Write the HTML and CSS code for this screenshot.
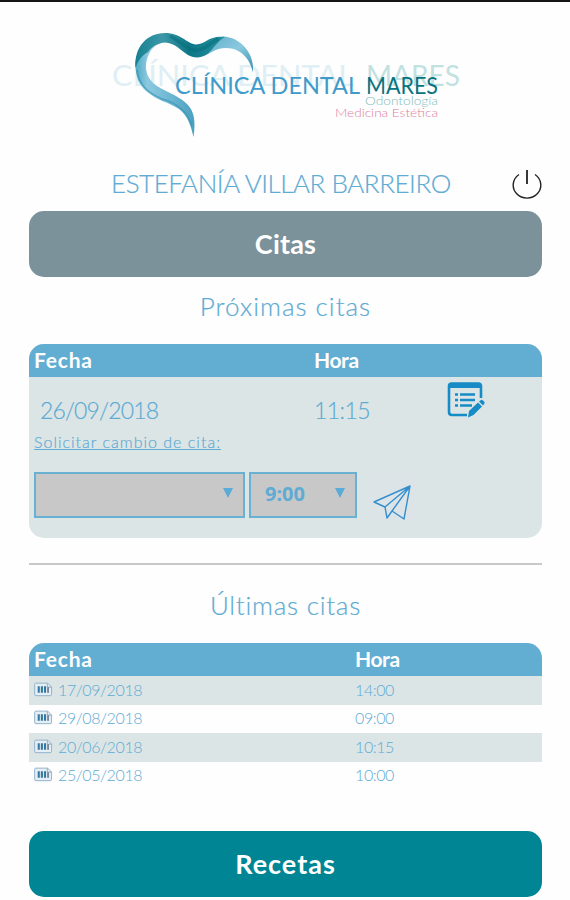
FILE: index.html
```html
<!DOCTYPE html>
<html lang="es">
<head>
<meta charset="utf-8">
<title>Clínica Dental Mares</title>
<link rel="stylesheet" href="styles.css">
</head>
<body>
<header class="brand">
  <svg class="logo" width="370" height="114" viewBox="100 28 370 114" role="img" aria-label="Clínica Dental Mares">
    <defs>
      <linearGradient id="ribbon" x1="0" y1="0" x2="1" y2="0">
        <stop offset="0" stop-color="#4fa9c5"/>
        <stop offset=".2" stop-color="#8cc9e0"/>
        <stop offset=".6" stop-color="#6cb6d2"/>
        <stop offset="1" stop-color="#4ba0bf"/>
      </linearGradient>
      <linearGradient id="lobe" x1="0" y1="0" x2="1" y2="1">
        <stop offset="0" stop-color="#5eaec9"/>
        <stop offset=".5" stop-color="#8bc9df"/>
        <stop offset="1" stop-color="#358fae"/>
      </linearGradient>
      <linearGradient id="deep" x1="0" y1="0" x2="1" y2="0">
        <stop offset="0" stop-color="#16808f"/>
        <stop offset=".3" stop-color="#3c98a8"/>
        <stop offset=".6" stop-color="#0d7786"/>
        <stop offset="1" stop-color="#2591a2"/>
      </linearGradient>
    </defs>
    <g class="ghost">
      <text x="112" y="86" textLength="242" lengthAdjust="spacingAndGlyphs" class="ghost-a">CLÍNICA DENTAL</text>
      <text x="366" y="86" textLength="94" lengthAdjust="spacingAndGlyphs" class="ghost-b">MARES</text>
    </g>
    <path fill="url(#ribbon)" d="M135.500 66C136 78 139 84 146 91C157 101 169 102 179 109C188 116 191 126 193.500 137C196 121 194 111 187 104C177 94 162 91 153 83C145 75 144 64 149 54C152 47 158 43 165 42.500L150 40C139 47 135 57 135.500 66Z"/>
    <path fill="url(#lobe)" d="M206 55C211 48 214 39 223 36.500C240 37 255 53 253 72.500C250 59 241 48 226 48C216 48 211 53 206 55Z"/>
    <path fill="url(#deep)" d="M135.500 68C134 47 147 33 165 33C181 33 187 44 196 44.500C206 44 209 35 225 37C217 41 213 50 206 55C200 58.500 193 58 188 55C180 50 175 43 165 42.500C157 43 151 47 148 52C141 56 138 61 135.500 68Z"/>
    <path fill="none" stroke="#056b78" stroke-width="3.500" opacity=".5" d="M170 36C180 41 186 50 196 50.500C206 50 210 42 219 39"/>
    <path fill="none" stroke="#3b96b3" stroke-width="1.500" opacity=".7" d="M137 70C139 87 151 94 162 99C177 103 188 112 192 126"/>
    <text x="175" y="94" textLength="185" lengthAdjust="spacingAndGlyphs" class="mark-a">CLÍNICA DENTAL</text>
    <text x="366" y="94" textLength="72" lengthAdjust="spacingAndGlyphs" class="mark-b">MARES</text>
    <text x="365" y="105" textLength="73" lengthAdjust="spacingAndGlyphs" class="sub-a">Odontología</text>
    <text x="335" y="117" textLength="103" lengthAdjust="spacingAndGlyphs" class="sub-b">Medicina Estética</text>
  </svg>
</header>
<main class="page">
  <div class="user">
    <h1 class="user-name">ESTEFANÍA VILLAR BARREIRO</h1>
    <a class="power" aria-label="Salir">
      <svg width="30" height="31" viewBox="0 0 30 31" fill="none" stroke="#222">
        <path stroke-width="1.400" d="M7 5.500A13.800 13 0 1 0 23 5.500"/>
        <path stroke-width="1.800" d="M15 1V15"/>
      </svg>
    </a>
  </div>
  <div class="button button-citas">Citas</div>
  <h2 class="title title-next">Próximas citas</h2>
  <section class="next">
    <div class="head head-next"><span class="head-date">Fecha</span><span class="head-time">Hora</span></div>
    <div class="appointment">
      <span class="date">26/09/2018</span>
      <span class="time">11:15</span>
      <svg class="note" width="38" height="38" viewBox="0 0 38 38">
        <path fill="none" stroke="#168bc5" stroke-width="2.600" d="M34 17V5Q34 2.500 31.500 2.500H4.500Q2 2.500 2 5V31Q2 34 5 34H20"/>
        <path fill="#168bc5" d="M2 3H34V7H2Z"/>
        <path fill="none" stroke="#168bc5" stroke-width="2.400" d="M8 13.500h3M13 13.500h15M8 19h3M13 19h15M8 24.500h3M13 24.500h12"/>
        <path fill="#168bc5" d="M22 30L31 21.500L35 25.500L26.500 34L21 36.500ZM32 20.500L34 19Q35 18.500 36 19.500L37.500 21Q38 22 37 23L36 24.500Z"/>
      </svg>
    </div>
    <div class="change">Solicitar cambio de cita:</div>
    <div class="controls">
      <div class="select select-day"><span></span><i class="arrow"></i></div>
      <div class="select select-hour"><span>9:00</span><i class="arrow"></i></div>
      <span class="send">
        <svg width="38" height="36" viewBox="0 0 38 36" fill="none" stroke="#358fcf" stroke-width="1.400" stroke-linejoin="round">
          <path d="M1 17L37 1L31 34L19 26L14 33L12 22ZM37 1L12 22M37 1L19 26M19 26L14 33"/>
        </svg>
      </span>
    </div>
  </section>
  <hr class="rule">
  <h2 class="title title-last">Últimas citas</h2>
  <section class="last">
    <div class="head head-last"><span class="head-date">Fecha</span><span class="head-time">Hora</span></div>
    <div class="row"><svg class="card-icon"><use href="#doc"/></svg><span>17/09/2018</span><span>14:00</span></div>
    <div class="row"><svg class="card-icon"><use href="#doc"/></svg><span>29/08/2018</span><span>09:00</span></div>
    <div class="row"><svg class="card-icon"><use href="#doc"/></svg><span>20/06/2018</span><span>10:15</span></div>
    <div class="row"><svg class="card-icon"><use href="#doc"/></svg><span>25/05/2018</span><span>10:00</span></div>
  </section>
  <div class="button button-recetas">Recetas</div>
</main>
<svg class="defs" width="0" height="0">
  <symbol id="doc" viewBox="0 0 20 15">
    <path fill="#e6eef5" stroke="#8fb0c9" d="M2 .8H14.500L18.500 5V12.500Q18.500 14 17 14H2Q.7 14 .7 12.500V2Q.7 .8 2 .8Z"/>
    <path fill="none" stroke="#9aa8b5" d="M14 1V5H18.500"/>
    <path fill="none" stroke="#35789f" stroke-width="2.200" d="M5 4V11M8.300 4V11M11.600 4V11"/>
    <path fill="none" stroke="#76889c" stroke-width="2" d="M14.800 5V11"/>
  </symbol>
</svg>
</body>
</html>
```
FILE: styles.css
```css
* { box-sizing: border-box; }
body {
  margin: 0;
  height: 900px;
  overflow: hidden;
  background: #fefefe;
  border-top: 2px solid #171415;
  color: #5eabd4;
  font-family: Lato, "Liberation Sans", sans-serif;
  font-weight: 300;
}
.brand { padding: 26px 0 0 100px; height: 162px; }
.logo { display: block; }
.ghost-a, .ghost-b { font-size: 29px; font-weight: 400; opacity: .7; }
.ghost-a { fill: #d3eaf0; }
.ghost-b { fill: #a9d5d5; }
.mark-a, .mark-b { font-size: 23.5px; font-weight: 400; }
.mark-a { fill: #409bcb; }
.mark-b { fill: #08747f; }
.sub-a, .sub-b { font-size: 12px; font-weight: 300; }
.sub-a { fill: #83bdba; }
.sub-b { fill: #dc829f; }
.page { width: 513px; margin-left: 29px; }
.user { display: flex; height: 47px; align-items: flex-start; }
.user-name {
  margin: 2px 0 0 82px;
  width: 402px;
  font-size: 26px;
  line-height: 34px;
  font-weight: 300;
  letter-spacing: -.45px;
  white-space: nowrap;
}
.user-name, .title, .date, .time, .change { -webkit-text-stroke: .2px currentColor; }
.power { padding-top: 5px; height: 36px; }
.power svg { display: block; }
.button {
  height: 66px;
  border-radius: 15px;
  color: #fff;
  font-size: 27px;
  font-weight: 700;
  line-height: 66px;
  text-align: center;
}
.button-citas { background: #7b929b; letter-spacing: .2px; }
.button-recetas { margin-top: 41px; background: #008594; letter-spacing: 1px; }
.title {
  margin: 0;
  font-size: 26px;
  font-weight: 300;
  line-height: 34px;
  text-align: center;
}
.title-next { padding-top: 12px; height: 67px; letter-spacing: 1px; }
.next {
  height: 194px;
  overflow: hidden;
  border-radius: 15px;
  background: #dce5e5;
}
.head {
  display: grid;
  height: 33px;
  padding-left: 5px;
  background: #62add2;
  color: #fff;
  font-size: 21px;
  font-weight: 700;
  line-height: 32px;
}
.head-date { letter-spacing: .8px; }
.head-time { letter-spacing: -.4px; }
.head-next { grid-template-columns: 280px 1fr; }
.head-last { grid-template-columns: 321px 1fr; border-radius: 15px 15px 0 0; }
.appointment {
  display: grid;
  grid-template-columns: 274px 133px 40px;
  height: 54px;
  padding-left: 11px;
  font-size: 23px;
  line-height: 66px;
}
.date { letter-spacing: -.85px; }
.time { letter-spacing: -.6px; }
.note { margin-top: 4px; }
.change {
  height: 41px;
  padding-left: 5px;
  font-size: 16px;
  letter-spacing: 1px;
  line-height: 22px;
  text-decoration: underline;
}
.controls { display: flex; gap: 4px; padding-left: 5px; }
.select {
  display: flex;
  justify-content: space-between;
  align-items: center;
  height: 46px;
  padding: 0 10px 4px 14px;
  border: 2px solid #6ab0d3;
  background: #c8c8c8;
  font: 700 20px "Noto Sans", sans-serif;
}
.select-day { width: 211px; }
.select-hour { width: 108px; }
.arrow {
  border: 5px solid transparent;
  border-top: 10px solid #5aabd5;
  border-bottom: 0;
}
.send {
  width: 48px;
  height: 48px;
  margin-left: 6px;
  padding: 13px 0 0 6px;
  background: #dde4e7;
}
.send svg { display: block; }
.rule { height: 2px; margin: 25px 0 23px; border: 0; background: #c9c9c9; }
.title-last { height: 55px; letter-spacing: .75px; }
.row {
  display: grid;
  grid-template-columns: 24px 297px 1fr;
  align-items: center;
  height: 28.5px;
  padding: 0 0 2px 5px;
  font-size: 16px;
  letter-spacing: -.4px;
}
.row:nth-child(even) { background: #dce5e5; }
.card-icon { width: 19px; height: 15px; }
.defs { display: block; }
```
